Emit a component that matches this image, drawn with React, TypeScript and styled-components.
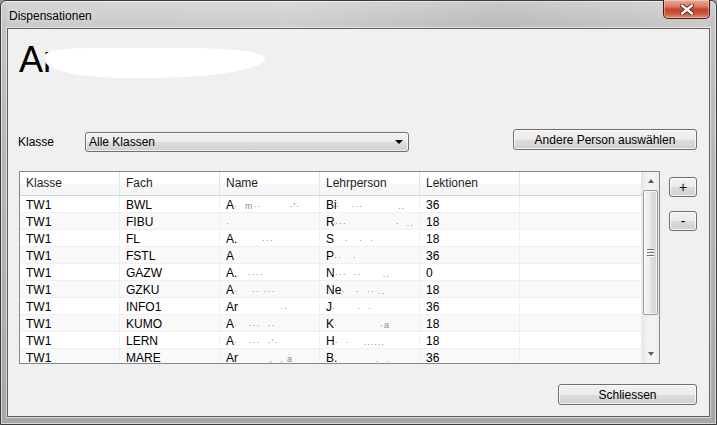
import React from "react";
import styled, { createGlobalStyle } from "styled-components";

const GlobalStyle = createGlobalStyle`
  html, body {
    margin: 0;
    padding: 0;
  }
  body {
    width: 717px;
    height: 425px;
    overflow: hidden;
    background: #9a9a9a;
    font-family: "Liberation Sans", Arial, sans-serif;
    font-size: 12px;
    color: #000;
  }
`;

const Window = styled.div`
  width: 717px;
  height: 425px;
  box-sizing: border-box;
  display: flex;
  flex-direction: column;
  padding: 0 6px 7px 6px;
  border: 1px solid #3c3c3c;
  border-radius: 6px 6px 0 0;
  background: linear-gradient(
    180deg,
    #d2d2d2 0%,
    #c4c4c4 5%,
    #b9b9b9 30%,
    #b0b0b0 70%,
    #a7a7a7 100%
  );
  box-shadow: inset 0 0 0 1px rgba(255, 255, 255, 0.55);
`;

const TitleBar = styled.div`
  height: 27px;
  display: flex;
  align-items: flex-start;
  justify-content: space-between;
  background: linear-gradient(
    90deg,
    rgba(255, 255, 255, 0.08) 0%,
    rgba(255, 255, 255, 0.18) 40%,
    rgba(0, 0, 0, 0.04) 70%,
    rgba(255, 255, 255, 0.1) 100%
  );
`;

const Title = styled.div`
  padding: 7px 0 0 2px;
  font-family: "Liberation Sans", Arial, sans-serif;
  font-size: 12px;
  line-height: 16px;
  color: #000;
  text-shadow: 0 0 6px rgba(255, 255, 255, 0.9);
`;

const CloseButton = styled.div`
  width: 45px;
  height: 18px;
  margin-top: -1px;
  display: flex;
  align-items: center;
  justify-content: center;
  border: 1px solid #4a1d14;
  border-top: none;
  border-radius: 0 0 5px 5px;
  background: linear-gradient(
    180deg,
    #e8a894 0%,
    #d98068 35%,
    #c5452c 52%,
    #c9553c 75%,
    #e19078 100%
  );
  box-shadow: inset 0 0 0 1px rgba(255, 255, 255, 0.35);
`;

const Client = styled.div`
  flex: 1;
  display: flex;
  flex-direction: column;
  background: #f0f0f0;
  border: 1px solid #5e5e5e;
  box-shadow: 0 0 0 1px rgba(255, 255, 255, 0.55);
`;

const Heading = styled.div`
  margin: 11px 0 0 11px;
  height: 40px;
  font-family: "Liberation Sans", Arial, sans-serif;
  font-size: 36px;
  line-height: 40px;
  white-space: nowrap;
  color: #000;
`;

const Redaction = styled.span`
  display: inline-block;
  vertical-align: top;
  width: 220px;
  height: 30px;
  margin: 8px 0 0 -10px;
  background: #ffffff;
  border-radius: 20% 35% 55% 40% / 25% 35% 70% 60%;
`;

const Toolbar = styled.div`
  margin-top: 49px;
  height: 23px;
  display: flex;
  align-items: flex-start;
  padding: 0 12px 0 10px;
`;

const Label = styled.div`
  width: 67px;
  margin-top: 3px;
  line-height: 20px;
`;

const Select = styled.div`
  width: 324px;
  height: 20px;
  margin-top: 3px;
  box-sizing: border-box;
  display: flex;
  align-items: center;
  justify-content: space-between;
  padding: 0 5px 0 3px;
  border: 1px solid #707070;
  border-radius: 3px;
  background: linear-gradient(180deg, #f2f2f2 0%, #ebebeb 50%, #dddddd 51%, #cfcfcf 100%);
  box-shadow: inset 0 0 0 1px rgba(255, 255, 255, 0.7);
`;

const Caret = styled.span`
  width: 0;
  height: 0;
  border-left: 4px solid transparent;
  border-right: 4px solid transparent;
  border-top: 4px solid #000;
`;

const Spacer = styled.div`
  flex: 1;
`;

const Button = styled.button<{ $w: number; $h?: number; $big?: boolean }>`
  width: ${(p) => p.$w}px;
  height: ${(p) => p.$h ?? 21}px;
  box-sizing: border-box;
  padding: 0;
  display: flex;
  align-items: center;
  justify-content: center;
  font-family: "Liberation Sans", Arial, sans-serif;
  font-size: ${(p) => (p.$big ? 14 : 12)}px;
  color: #000;
  border: 1px solid #707070;
  border-radius: 3px;
  background: linear-gradient(180deg, #f2f2f2 0%, #ebebeb 50%, #dddddd 51%, #cfcfcf 100%);
  box-shadow: inset 0 0 0 1px rgba(255, 255, 255, 0.75);
`;

const MainRow = styled.div`
  margin-top: 19px;
  display: flex;
  align-items: flex-start;
  padding: 0 12px 0 11px;
`;

const TableBox = styled.div`
  width: 641px;
  height: 193px;
  box-sizing: border-box;
  display: flex;
  border: 1px solid #828790;
  background: #fff;
  overflow: hidden;
`;

const Grid = styled.div`
  flex: 1;
  overflow: hidden;
`;

const Row = styled.div<{ $alt?: boolean }>`
  display: grid;
  grid-template-columns: repeat(5, 100px) 1fr;
  height: 17px;
  box-sizing: border-box;
  border-bottom: 1px solid #f0f0f0;
  background: ${(p) => (p.$alt ? "#f9f9f9" : "#ffffff")};
`;

const HeaderRow = styled.div`
  display: grid;
  grid-template-columns: repeat(5, 100px) 1fr;
  height: 24px;
  box-sizing: border-box;
  border-bottom: 1px solid #d5d5d5;
  background: linear-gradient(180deg, #ffffff 0%, #ffffff 50%, #f7f8f9 51%, #f3f4f6 100%);
`;

const HeaderCell = styled.div`
  padding-left: 6px;
  line-height: 23px;
  border-right: 1px solid #e3e4e6;
  color: #1e1e1e;
  white-space: nowrap;
  overflow: hidden;
`;

const Cell = styled.div`
  padding: 2px 0 0 6px;
  line-height: 14px;
  border-right: 1px solid #f0f0f0;
  white-space: pre;
  overflow: hidden;
`;

const Faint = styled.span`
  color: #8a8a8a;
  font-size: 9px;
  letter-spacing: 1px;
`;

const Scrollbar = styled.div`
  width: 17px;
  display: flex;
  flex-direction: column;
  align-items: center;
  background: linear-gradient(90deg, #e6e6e6 0%, #f2f2f2 30%, #f4f4f4 70%, #ebebeb 100%);
`;

const ArrowCell = styled.div`
  height: 18px;
  width: 17px;
  display: flex;
  align-items: center;
  justify-content: center;
`;

const Arrow = styled.span<{ $up?: boolean }>`
  width: 0;
  height: 0;
  border-left: 3.5px solid transparent;
  border-right: 3.5px solid transparent;
  ${(p) =>
    p.$up ? "border-bottom: 4px solid #606060;" : "border-top: 4px solid #606060;"}
`;

const Thumb = styled.div`
  width: 15px;
  height: 125px;
  box-sizing: border-box;
  display: flex;
  flex-direction: column;
  align-items: center;
  justify-content: center;
  gap: 2px;
  border: 1px solid #9a9a9a;
  border-radius: 2px;
  background: linear-gradient(90deg, #f6f6f6 0%, #ececec 45%, #dcdcdc 55%, #d6d6d6 100%);
  box-shadow: inset 0 0 0 1px rgba(255, 255, 255, 0.7);
`;

const Grip = styled.span`
  width: 7px;
  height: 1px;
  background: #707070;
  box-shadow: 0 1px 0 #ffffff;
`;

const Track = styled.div`
  flex: 1;
`;

const SideButtons = styled.div`
  margin: 6px 0 0 9px;
  display: flex;
  flex-direction: column;
  gap: 14px;
`;

const Footer = styled.div`
  margin-top: 20px;
  display: flex;
  justify-content: flex-end;
  padding-right: 12px;
`;

const rows = [
  { fach: "BWL", name: ["A", "·  m··        ·'·"], lehr: ["Bi", "·   ···          .."], lek: "36" },
  { fach: "FIBU", name: ["", "·"], lehr: ["R", "···              ·  .."], lek: "18" },
  { fach: "FL", name: ["A.", "       ···"], lehr: ["S", "   ·   ·  ·"], lek: "18" },
  { fach: "FSTL", name: ["A", ""], lehr: ["P", "··   ·"], lek: "36" },
  { fach: "GAZW", name: ["A.", "   ····"], lehr: ["N", "···  ··      .."], lek: "0" },
  { fach: "GZKU", name: ["A", "·    ·· ···"], lehr: ["Ne", "·   ·  ·· .."], lek: "18" },
  { fach: "INFO1", name: ["Ar", "            ··"], lehr: ["J", "·      ·  ·"], lek: "36" },
  { fach: "KUMO", name: ["A", "·   ···  ··"], lehr: ["K", "·            ·a"], lek: "18" },
  { fach: "LERN", name: ["A", "·   ···  ·'·"], lehr: ["H", "·  ·    ......"], lek: "18" },
  { fach: "MARE", name: ["Ar", "         ,  . a"], lehr: ["B.", "           .  ."], lek: "36" },
];

function CloseGlyph() {
  return (
    <svg width="14" height="11" viewBox="0 0 14 11">
      <path
        d="M2 1.5 L12 9.5 M12 1.5 L2 9.5"
        stroke="#5a2418"
        strokeWidth="4.2"
        strokeLinecap="round"
        fill="none"
      />
      <path
        d="M2 1.5 L12 9.5 M12 1.5 L2 9.5"
        stroke="#ffffff"
        strokeWidth="2.4"
        strokeLinecap="round"
        fill="none"
      />
    </svg>
  );
}

export default function App() {
  return (
    <>
      <GlobalStyle />
      <Window>
        <TitleBar>
          <Title>Dispensationen</Title>
          <CloseButton>
            <CloseGlyph />
          </CloseButton>
        </TitleBar>
        <Client>
          <Heading>
            Ar
            <Redaction />
          </Heading>

          <Toolbar>
            <Label>Klasse</Label>
            <Select>
              <span>Alle Klassen</span>
              <Caret />
            </Select>
            <Spacer />
            <Button $w={184}>Andere Person auswählen</Button>
          </Toolbar>

          <MainRow>
            <TableBox>
              <Grid>
                <HeaderRow>
                  <HeaderCell>Klasse</HeaderCell>
                  <HeaderCell>Fach</HeaderCell>
                  <HeaderCell>Name</HeaderCell>
                  <HeaderCell>Lehrperson</HeaderCell>
                  <HeaderCell>Lektionen</HeaderCell>
                  <HeaderCell />
                </HeaderRow>
                {rows.map((r, i) => (
                  <Row key={r.fach} $alt={i % 2 === 1}>
                    <Cell>TW1</Cell>
                    <Cell>{r.fach}</Cell>
                    <Cell>
                      {r.name[0]}
                      <Faint>{r.name[1]}</Faint>
                    </Cell>
                    <Cell>
                      {r.lehr[0]}
                      <Faint>{r.lehr[1]}</Faint>
                    </Cell>
                    <Cell>{r.lek}</Cell>
                    <Cell />
                  </Row>
                ))}
              </Grid>
              <Scrollbar>
                <ArrowCell>
                  <Arrow $up />
                </ArrowCell>
                <Thumb>
                  <Grip />
                  <Grip />
                  <Grip />
                </Thumb>
                <Track />
                <ArrowCell>
                  <Arrow />
                </ArrowCell>
              </Scrollbar>
            </TableBox>
            <SideButtons>
              <Button $w={28} $h={20} $big>+</Button>
              <Button $w={28} $h={20} $big>-</Button>
            </SideButtons>
          </MainRow>

          <Footer>
            <Button $w={139}>Schliessen</Button>
          </Footer>
        </Client>
      </Window>
    </>
  );
}
